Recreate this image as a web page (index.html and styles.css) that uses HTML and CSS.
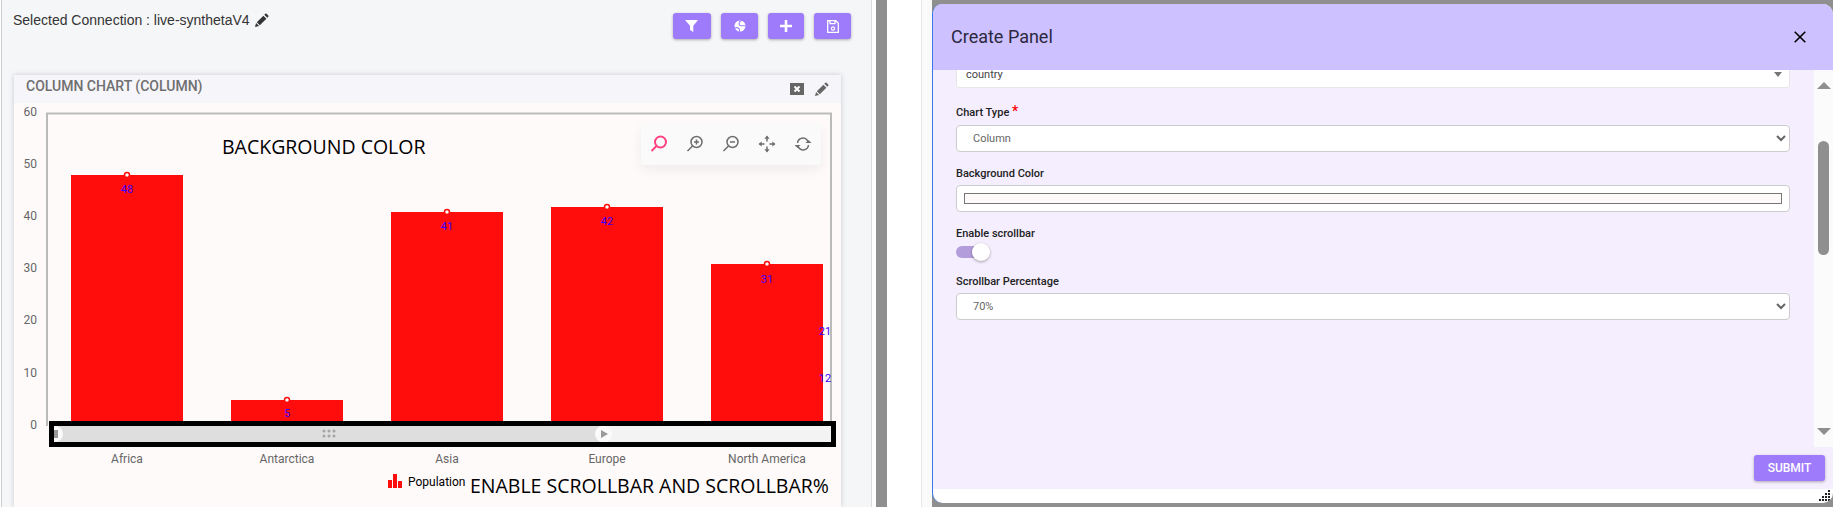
FILE: index.html

```html
<!DOCTYPE html>
<html>
<head>
  <meta charset="UTF-8">
  <title>Create Panel</title>
  <link rel="stylesheet" href="styles.css">
</head>
<body>
  <svg class="sprites" width="0" height="0">
    <symbol id="pencil" viewBox="0 0 16 16">
      <path d="M1 15l1.2-4.4 3.2 3.2z"/>
      <path d="M3 9.8 10 2.8l3.2 3.2-7 7z"/>
      <path d="M11 1.8l1-1a1 1 0 0 1 1.4 0l1.8 1.8a1 1 0 0 1 0 1.4l-1 1z"/>
    </symbol>
  </svg>

  <div class="dashboard">
    <div class="top-row">
      <div class="connection">Selected Connection : live-synthetaV4
        <svg class="icon-pencil"><use href="#pencil"/></svg>
      </div>
      <div class="actions">
        <button class="action-btn btn-filter">
          <svg width="14" height="14" viewBox="0 0 14 14"><path fill="#fff" d="M0 1h13L8.300 6.800V13L5 11V6.800z"/></svg>
        </button>
        <button class="action-btn btn-pie">
          <svg width="14" height="14" viewBox="0 0 14 14"><circle cx="7" cy="7" r="5.500" fill="#fff"/><path d="M8.500 1.500C5 3 5.500 6.500 8 6.800H12.500M1.800 9C4.500 8 7 9 6.500 12.500" fill="none" stroke="#9d7bfb" stroke-width="1.100"/></svg>
        </button>
        <button class="action-btn btn-add">
          <svg width="12" height="12" viewBox="0 0 12 12"><path fill="#fff" d="M4.700 0h2.600v4.700H12v2.600H7.300V12H4.700V7.300H0V4.700h4.700z"/></svg>
        </button>
        <button class="action-btn btn-save">
          <svg width="12" height="13" viewBox="0 0 12 13"><path fill="none" stroke="#fff" stroke-width="1.300" d="M.7.7h8.100l2.500 2.500v9.100H.7zM3 .7v3h5v-3"/><circle cx="6" cy="8.500" r="1.600" fill="none" stroke="#fff" stroke-width="1.200"/></svg>
        </button>
      </div>
    </div>

    <div class="chart-card">
      <div class="card-head">
        <span class="card-title">COLUMN CHART (COLUMN)</span>
        <div class="card-tools">
          <svg width="14" height="12" viewBox="0 0 14 12"><rect width="14" height="12" fill="#666"/><path d="M4.500 3.500l5 5m0-5-5 5" stroke="#fff" stroke-width="2"/></svg>
          <svg class="icon-pencil-small"><use href="#pencil"/></svg>
        </div>
      </div>
      <div class="card-body">
        <svg class="chart" width="827" height="404" viewBox="14 103 827 404">
          <path class="plot-frame" d="M47 426V113.500H831V426"/>

          <g class="y-labels">
            <text x="37" y="116">60</text>
            <text x="37" y="168">50</text>
            <text x="37" y="220">40</text>
            <text x="37" y="272">30</text>
            <text x="37" y="324">20</text>
            <text x="37" y="377">10</text>
            <text x="37" y="429">0</text>
          </g>

          <g class="bars">
            <rect x="71" y="175" width="112" height="247"/>
            <rect x="231" y="400" width="112" height="22"/>
            <rect x="391" y="212" width="112" height="210"/>
            <rect x="551" y="207" width="112" height="215"/>
            <rect x="711" y="264" width="112" height="158"/>
          </g>

          <g class="markers">
            <circle cx="127" cy="175" r="2.500"/>
            <circle cx="287" cy="400" r="2.500"/>
            <circle cx="447" cy="212" r="2.500"/>
            <circle cx="607" cy="207" r="2.500"/>
            <circle cx="767" cy="264" r="2.500"/>
          </g>

          <g class="values">
            <text x="127" y="193">48</text>
            <text x="287" y="417">5</text>
            <text x="447" y="230">41</text>
            <text x="607" y="225">42</text>
            <text x="767" y="283">31</text>
            <text x="825" y="335">21</text>
            <text x="825" y="382">12</text>
          </g>

          <rect class="slider-rest" x="54" y="426" width="777" height="16"/>
          <rect class="slider-fill" x="54" y="426" width="550" height="16"/>
          <circle class="slider-handle" cx="55" cy="434" r="8"/>
          <rect class="slider-mark" x="54" y="430" width="4" height="8"/>
          <g class="slider-grip">
            <circle cx="324" cy="431" r="1.500"/><circle cx="329" cy="431" r="1.500"/><circle cx="334" cy="431" r="1.500"/>
            <circle cx="324" cy="436" r="1.500"/><circle cx="329" cy="436" r="1.500"/><circle cx="334" cy="436" r="1.500"/>
          </g>
          <circle class="slider-handle" cx="603.500" cy="434" r="8.500"/>
          <path class="slider-mark" d="M601 430l7 4-7 4z"/>
          <path class="slider-outline" d="M51.500 423.500H833.500V444.500H51.500z"/>

          <g class="x-labels">
            <text x="127" y="463">Africa</text>
            <text x="287" y="463">Antarctica</text>
            <text x="447" y="463">Asia</text>
            <text x="607" y="463">Europe</text>
            <text x="767" y="463">North America</text>
          </g>

          <path class="legend-icon" d="M388 480h4v8h-4zM393 474h4v14h-4zM398 481h4v7h-4z"/>
          <text class="legend-text" x="408" y="486">Population</text>

          <text class="note" x="222" y="154">BACKGROUND COLOR</text>
          <text class="note" x="470" y="493">ENABLE SCROLLBAR AND SCROLLBAR%</text>
        </svg>

        <div class="zoom-tools">
          <svg width="18" height="18" viewBox="0 0 18 18" class="tool-on"><circle cx="10.500" cy="7" r="5.500"/><path d="M6.500 11 1.500 16"/></svg>
          <svg width="18" height="18" viewBox="0 0 18 18"><circle cx="10.500" cy="7" r="5.500"/><path d="M6.500 11 1.500 16M8 7h5M10.500 4.500v5"/></svg>
          <svg width="18" height="18" viewBox="0 0 18 18"><circle cx="10.500" cy="7" r="5.500"/><path d="M6.500 11 1.500 16M8 7h5"/></svg>
          <svg width="18" height="18" viewBox="0 0 18 18" class="tool-pan"><path d="M9 1.500v5M9 11.500v5M1.500 9h5M11.500 9h5"/><path class="tool-fill" d="M9 .5l2.600 3.200H6.400zM9 17.500l2.600-3.200H6.400zM.5 9l3.200-2.600v5.200zM17.500 9l-3.200-2.600v5.200z"/></svg>
          <svg width="18" height="18" viewBox="0 0 18 18" class="tool-reset"><path d="M3.500 8A5.500 5.500 0 0 1 13.500 5.500L14.500 8M14.500 10A5.500 5.500 0 0 1 4.500 12.500L3.500 10"/><path class="tool-fill" d="M11.500 8h6l-3-3zM.5 10h6l-3 3z"/></svg>
        </div>
      </div>
    </div>
  </div>

  <div class="gutter"></div>
  <div class="divider"></div>
  <div class="blank-page"></div>
  <div class="blank-strip"></div>

  <div class="modal-wrap">
    <div class="modal">
      <div class="modal-head">
        <span class="modal-title">Create Panel</span>
        <svg width="12" height="12" viewBox="0 0 12 12" class="modal-close"><path d="M.7.7l10.600 10.600M11.300.7.700 11.300"/></svg>
      </div>
      <div class="modal-body">
        <div class="scroll-row">
          <form class="panel-form">
            <div class="fake-select">
              <span>country</span>
              <i class="caret"></i>
            </div>

            <div class="field field-first">
              <label>Chart Type <em class="required">*</em></label>
              <select><option>Column</option></select>
            </div>

            <div class="field">
              <label>Background Color</label>
              <input type="color" value="#fffafa">
            </div>

            <div class="field field-toggle">
              <label>Enable scrollbar</label>
              <div class="toggle"><span class="toggle-thumb"></span></div>
            </div>

            <div class="field">
              <label>Scrollbar Percentage</label>
              <select><option>70%</option></select>
            </div>
          </form>

          <div class="scroll-track">
            <i class="arrow-up"></i>
            <div class="scroll-thumb"></div>
            <i class="arrow-down"></i>
          </div>
        </div>
        <div class="modal-actions">
          <button type="button" class="submit-btn">SUBMIT</button>
        </div>
      </div>
      <div class="modal-foot">
        <svg width="12" height="11" viewBox="0 0 12 11" class="resize-grip"><path d="M9 0h2v2H9zM6 3h2v2H6zM9 3h2v2H9zM3 6h2v2H3zM6 6h2v2H6zM9 6h2v2H9zM0 9h2v2H0zM3 9h2v2H3zM6 9h2v2H6zM9 9h2v2H9z"/></svg>
      </div>
    </div>
  </div>
</body>
</html>
```

FILE: styles.css

```css
html, body { margin: 0; height: 100%; }
body { display: flex; height: 507px; overflow: hidden; background: #fff; font-family: Roboto, sans-serif; }
.sprites { position: absolute; }

/* left side */
.dashboard { width: 869px; margin-left: 1px; flex: none; background: #f5f6f8; border-left: 1px solid #ccd0d4; border-right: 1px solid #ddd; height: 507px; overflow: hidden; }
.top-row { display: flex; justify-content: space-between; height: 75px; }
.connection { margin: 12px 0 0 11px; font: 14px "Liberation Sans", Arial, sans-serif; color: #333; display: flex; align-items: center; height: 16px; gap: 4px; }
.icon-pencil { width: 15px; height: 15px; fill: #333; }
.actions { display: flex; gap: 10px; margin: 13px 20px 0 0; }
.action-btn { height: 26px; padding: 0; border: none; border-radius: 3px; background: #9d7bfb; box-shadow: 0 1px 3px rgba(0,0,0,.3); display: flex; align-items: center; justify-content: center; }
.btn-filter { width: 38px; }
.btn-pie { width: 37px; }
.btn-add { width: 36px; }
.btn-save { width: 37px; }

.chart-card { width: 827px; margin-left: 12px; background: #fffafa; box-shadow: 0 0 5px rgba(60,70,90,.25); }
.card-head { height: 28px; background: #f6f6fa; display: flex; justify-content: space-between; align-items: center; }
.card-title { margin: 0 0 6px 12px; font-size: 14px; color: #6f6f6f; font-weight: 500; }
.card-tools { display: flex; align-items: center; gap: 10px; margin: 0 12px 0 0; }
.icon-pencil-small { width: 15px; height: 15px; fill: #666; }
.card-body { position: relative; }
.chart { display: block; }
.plot-frame { fill: none; stroke: #bbb; stroke-width: 2; }
.y-labels text { font-size: 12px; fill: #666; text-anchor: end; }
.x-labels text { font-size: 12px; fill: #666; text-anchor: middle; }
.bars rect { fill: #ff0d0d; }
.markers circle { fill: #fff; stroke: #ff0d0d; stroke-width: 1.500; }
.values text { font-size: 11px; fill: #3a00ff; text-anchor: middle; }
.slider-rest { fill: #f3f3f3; }
.slider-fill { fill: #dedede; }
.slider-handle { fill: #fafafa; }
.slider-mark { fill: #999; }
.slider-grip circle { fill: #a5a5a5; }
.slider-outline { fill: none; stroke: #000; stroke-width: 5; }
.legend-icon { fill: #ff0d0d; }
.legend-text { font-size: 12px; fill: #000; }
.note { font-family: "Open Sans", sans-serif; font-size: 19.500px; font-weight: 500; fill: #000; }

.zoom-tools { position: absolute; left: 627px; top: 20px; width: 180px; height: 42px; box-sizing: border-box; padding: 0 9px; background: #fafafa; border-radius: 3px; box-shadow: 0 5px 12px rgba(0,0,0,.06); display: flex; align-items: center; justify-content: space-between; }
.zoom-tools svg { fill: none; stroke: #6e6e6e; stroke-width: 1.500; }
.zoom-tools .tool-on { stroke: #ff4081; stroke-width: 2; }
.zoom-tools .tool-fill { fill: #6e6e6e; stroke: none; }

/* the gray strip and the page behind the dialog */
.gutter { width: 4px; flex: none; }
.divider { width: 11px; flex: none; background: #8f8f8f; }
.blank-page { width: 34px; flex: none; border-right: 1px solid #e8e8e8; }
.blank-strip { width: 10px; flex: none; background: #fafafa; }
.modal-wrap { width: 901px; flex: none; background: #8f8f8f; padding-top: 4px; }
.modal { width: 900px; height: 499px; border-left: 1px solid #3b78e7; border-radius: 10px; overflow: hidden; display: flex; flex-direction: column; background: #fff; }

.modal-head { height: 66px; flex: none; background: #cdc1ff; display: flex; align-items: center; justify-content: space-between; padding: 0 27px 0 18px; }
.modal-title { font-size: 18px; color: #2b2840; margin-bottom: 2px; }
.modal-close { fill: none; stroke: #000; stroke-width: 1.600; }

.modal-body { height: 419px; flex: none; background: #f5eefe; display: flex; flex-direction: column; }
.scroll-row { height: 377px; display: flex; overflow: hidden; }
.panel-form { flex: 1; margin-top: -9px; padding: 0 24px 0 23px; }
.fake-select { height: 25px; border: 1px solid #e6e6e6; background: #fff; border-radius: 0 0 3px 3px; display: flex; align-items: center; justify-content: space-between; padding: 0 7px 0 9px; font-size: 11px; color: #444; }
.caret { width: 0; height: 0; border-left: 4px solid transparent; border-right: 4px solid transparent; border-top: 5px solid #777; }
.field { margin-top: 15px; }
.field-first { margin-top: 18px; }
.field label { display: block; height: 14px; line-height: 14px; margin-bottom: 4px; font-size: 11px; font-weight: 500; color: #222; }
.field-first label { margin-bottom: 5px; }
.required { color: #ff0000; font-style: normal; font-size: 14px; line-height: 0; }
.field select { display: block; width: 100%; height: 27px; padding: 0 0 0 12px; border: 1px solid #ccc; border-radius: 4px; background-color: #fff; font: 11px Roboto, sans-serif; color: #666; }
.field input[type=color] { display: block; width: 100%; height: 27px; box-sizing: border-box; padding: 7px; border: 1px solid #ccc; border-radius: 4px; background: #fff; }
.field input[type=color]::-webkit-color-swatch-wrapper { padding: 0; }
.field input[type=color]::-webkit-color-swatch { border: 1px solid #777; border-radius: 0; }
.toggle { position: relative; width: 26px; height: 12px; border-radius: 6px; background: #b39ddb; }
.toggle-thumb { position: absolute; right: -8px; top: -3px; width: 18px; height: 18px; border-radius: 50%; background: #fff; box-shadow: 0 1px 3px rgba(0,0,0,.35); }
.field-toggle + .field { margin-top: 17px; }
.field-toggle label { margin-bottom: 5px; }

.scroll-track { width: 19px; flex: none; background: #fbfbfb; display: flex; flex-direction: column; align-items: center; }
.scroll-thumb { width: 11px; height: 114px; margin-top: 52px; border-radius: 6px; background: #8f8f8f; }
.arrow-up, .arrow-down { width: 0; height: 0; border-left: 7px solid transparent; border-right: 7px solid transparent; }
.arrow-up { margin-top: 12px; border-bottom: 7px solid #8f8f8f; }
.arrow-down { margin-top: auto; margin-bottom: 12px; border-top: 7px solid #8f8f8f; }

.modal-actions { height: 42px; display: flex; justify-content: flex-end; padding: 8px 8px 0 0; box-sizing: border-box; }
.submit-btn { width: 71px; height: 26px; padding: 0; border: none; border-radius: 3px; background: #9d7bfb; color: #fff; font: 500 12px Roboto, sans-serif; box-shadow: 0 1px 3px rgba(0,0,0,.3); }

.modal-foot { flex: 1; display: flex; justify-content: flex-end; align-items: flex-start; padding: 1px 2px 0 0; }
.resize-grip { fill: #222; }
```
